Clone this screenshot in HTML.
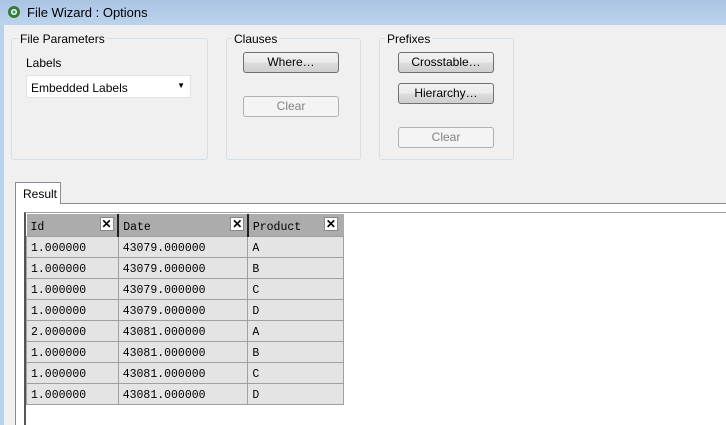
<!DOCTYPE html>
<html><head><style>
*{margin:0;padding:0;box-sizing:border-box}
body{width:726px;height:425px;overflow:hidden;background:#f0f0f0;font-family:"Liberation Sans",sans-serif;font-size:12px;color:#000;position:relative}
.a{position:absolute}
.title{left:0;top:0;width:726px;height:25px;background:linear-gradient(#a9c4e4,#bcd3ec);}
.title span{position:absolute;left:27px;top:5px;font-size:13px;color:#000}
.grp{border:1px solid #d5dfe5;border-radius:3px}
.lg{background:#f0f0f0;padding:0 2px;font-size:12px}
.btn{border:1px solid #707070;border-radius:3px;background:linear-gradient(#f2f2f2 0,#ebebeb 50%,#dddddd 51%,#cfcfcf);text-align:center;line-height:18px}
.dis{border:1px solid #adb2b5;border-radius:3px;background:#f4f4f4;color:#838383;text-align:center;line-height:18px}
table{border-collapse:collapse;font-family:"Liberation Mono",monospace;font-size:11.5px}
td{border:1px solid #a0a0a0;background:#e4e4e4;height:21px;padding:3px 0 0 4px;vertical-align:middle}
th{background:#acacac;border-left:2px solid #222;border-bottom:1px solid #a0a0a0;height:22px;text-align:left;font-weight:normal;padding:6px 0 0 4px;position:relative}
.x{position:absolute;top:3px;width:14px;height:14px;background:#fff;border:1px solid #888;font-family:"Liberation Sans",sans-serif;font-size:12px;line-height:12px;text-align:center;font-weight:bold}
</style></head><body>
<div class="a title"><svg class="a" style="left:7px;top:5px" width="14" height="14"><circle cx="7" cy="7" r="6" fill="#3a7a3a"/><circle cx="7" cy="7" r="3" fill="#fff"/><circle cx="7" cy="7" r="1.6" fill="#2a6"/></svg><span>File Wizard : Options</span></div>
<div class="a" style="left:0;top:25px;width:4px;height:400px;background:#b9d1ea"></div>

<div class="a grp" style="left:11px;top:38px;width:197px;height:122px"></div>
<div class="a lg" style="left:18px;top:32px">File Parameters</div>
<div class="a" style="left:26px;top:56px">Labels</div>
<div class="a" style="left:26px;top:75px;width:165px;height:23px;background:#fff;border:1px solid #e2e2e2;padding:5px 0 0 4px">Embedded Labels<span class="a" style="right:5px;top:5px;font-size:8px">▼</span></div>

<div class="a grp" style="left:226px;top:38px;width:135px;height:122px"></div>
<div class="a lg" style="left:232px;top:32px">Clauses</div>
<div class="a btn" style="left:243px;top:52px;width:96px;height:21px">Where…</div>
<div class="a dis" style="left:243px;top:96px;width:96px;height:21px">Clear</div>

<div class="a grp" style="left:379px;top:38px;width:135px;height:122px"></div>
<div class="a lg" style="left:385px;top:32px">Prefixes</div>
<div class="a btn" style="left:398px;top:52px;width:96px;height:21px">Crosstable…</div>
<div class="a btn" style="left:398px;top:83px;width:96px;height:21px">Hierarchy…</div>
<div class="a dis" style="left:398px;top:127px;width:96px;height:21px">Clear</div>

<div class="a" style="left:15px;top:203px;width:711px;height:222px;background:#fff;border-left:1px solid #898c95;border-top:1px solid #898c95"></div>
<div class="a" style="left:15px;top:182px;width:46px;height:22px;background:#fff;border:1px solid #898c95;border-bottom:none;padding:4px 0 0 7px">Result</div>
<div class="a" style="left:24px;top:212px;width:702px;height:213px;border-left:2px solid #555;border-top:1px solid #a0a0a0"></div>

<table class="a" style="left:26px;top:214px;width:318px">
<tr><th style="width:92px;border-left:none">Id<span class="x" style="left:73px">✕</span></th><th style="width:130px">Date<span class="x" style="left:111px">✕</span></th><th style="width:96px">Product<span class="x" style="left:75px">✕</span></th></tr>
<tr><td>1.000000</td><td>43079.000000</td><td>A</td></tr>
<tr><td>1.000000</td><td>43079.000000</td><td>B</td></tr>
<tr><td>1.000000</td><td>43079.000000</td><td>C</td></tr>
<tr><td>1.000000</td><td>43079.000000</td><td>D</td></tr>
<tr><td>2.000000</td><td>43081.000000</td><td>A</td></tr>
<tr><td>1.000000</td><td>43081.000000</td><td>B</td></tr>
<tr><td>1.000000</td><td>43081.000000</td><td>C</td></tr>
<tr><td>1.000000</td><td>43081.000000</td><td>D</td></tr>
</table>
</body></html>
